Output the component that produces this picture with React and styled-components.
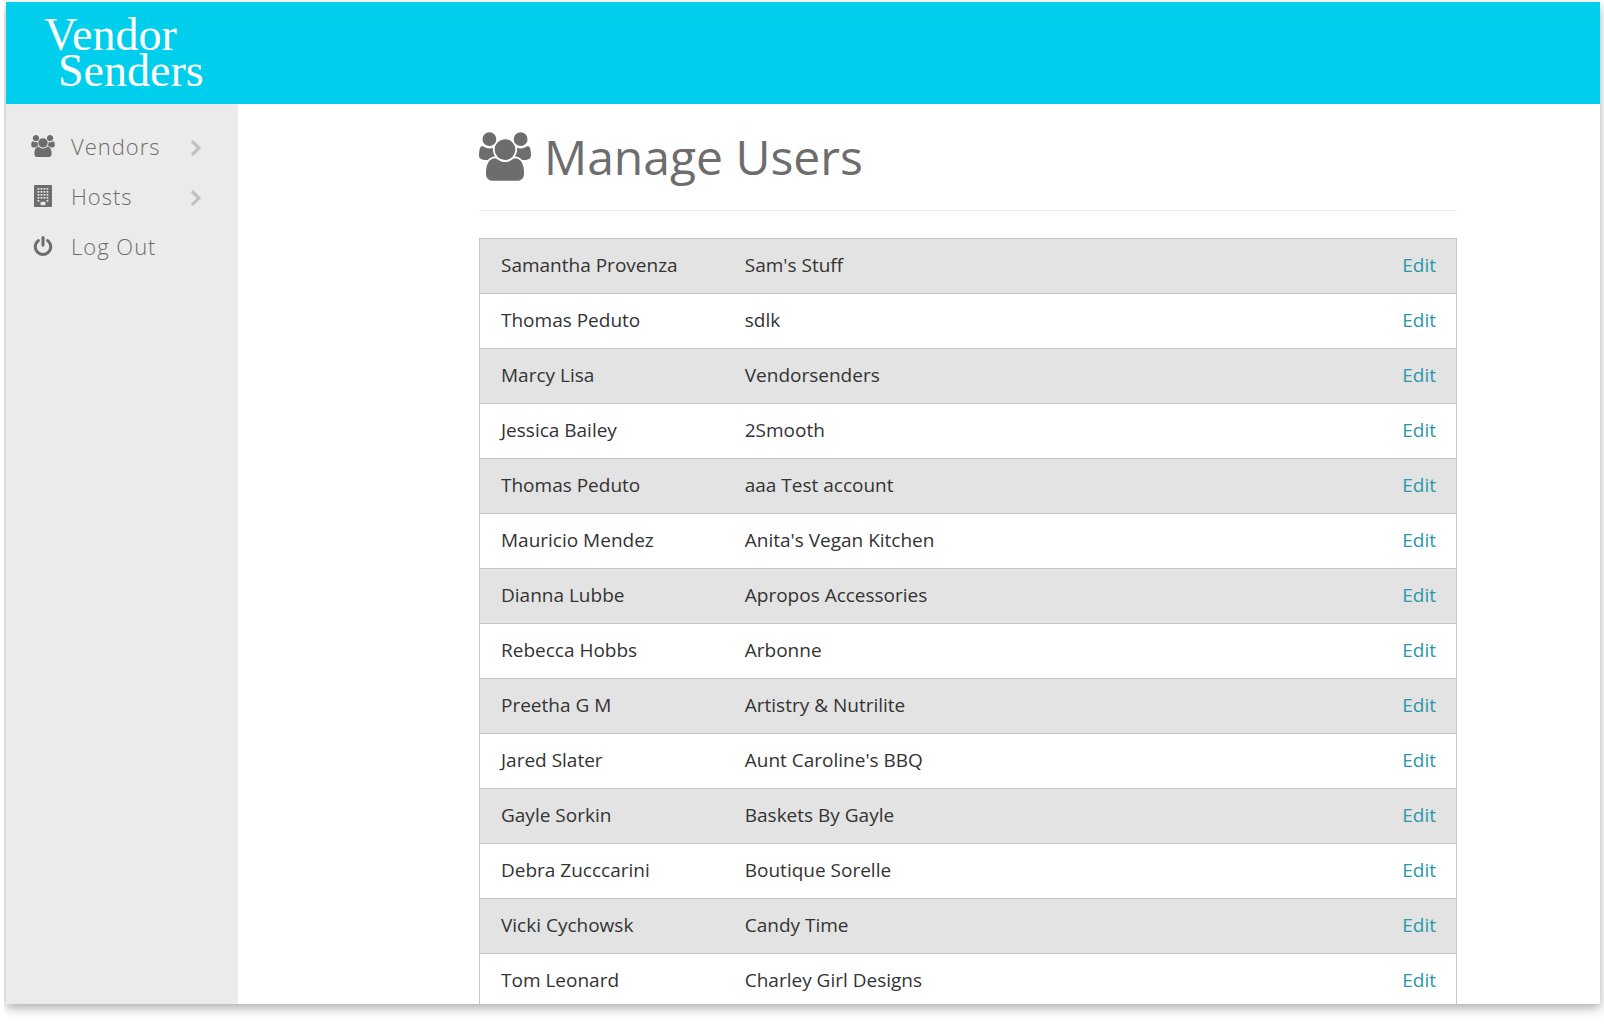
import React from "react";
import styled, { createGlobalStyle } from "styled-components";

const GlobalStyle = createGlobalStyle`
  *, *::before, *::after { box-sizing: border-box; }
  body {
    margin: 0;
    background: #fff;
    color: #333;
    font-family: "Open Sans", "Noto Sans", sans-serif;
    font-size: 19px;
  }
`;

const Page = styled.div`
  height: 100vh;
  margin-left: 4px;
  padding: 2px 4px 20px 2px;
  overflow: hidden;
`;

const Frame = styled.div`
  display: flex;
  flex-direction: column;
  height: 100%;
  background: #fff;
  box-shadow: 0 4px 10px rgba(0, 0, 0, 0.32);
`;

const Header = styled.header`
  flex: none;
  height: 102px;
  padding: 15px 38px;
  background: #00ceed;
`;

const Logo = styled.a`
  display: inline-flex;
  flex-direction: column;
  color: #fff;
  font-family: "Liberation Serif", serif;
  font-size: 46px;
  line-height: 36px;
  text-decoration: none;
`;

const LogoLine = styled.span`
  padding-left: ${(p) => (p.$indent ? "14px" : "0")};
`;

const Body = styled.div`
  display: flex;
  flex: 1;
  min-height: 0;
`;

const Sidebar = styled.nav`
  flex: none;
  width: 232px;
  padding: 17px 35px 0 25px;
  background: #ebebeb;
`;

const NavList = styled.ul`
  margin: 0;
  padding: 0;
  list-style: none;
`;

const NavLink = styled.a`
  display: grid;
  grid-template-columns: 24px 1fr 12px;
  column-gap: 16px;
  align-items: center;
  height: 50px;
  color: #6d6d6d;
  font-size: 22px;
  font-weight: 300;
  letter-spacing: 1px;
  text-decoration: none;
`;

const Icon = styled.svg`
  display: block;
  flex: none;
  justify-self: center;
  width: ${(p) => p.$width}px;
  height: ${(p) => p.$height}px;
  fill: ${(p) => p.$color || "#6d6d6d"};
`;

const Main = styled.main`
  flex: 1;
  min-width: 0;
  padding: 19px 143px 0 241px;
  overflow: hidden;
`;

const Title = styled.h1`
  display: flex;
  align-items: center;
  gap: 13px;
  height: 88px;
  margin: 0 0 27px;
  padding-bottom: 20px;
  border-bottom: 1px solid #eaeaea;
  color: #6d6d6d;
  font-size: 48px;
  font-weight: 400;
  line-height: 66px;
`;

const Table = styled.table`
  width: 100%;
  table-layout: fixed;
  border: 1px solid #c6c6c6;
  border-spacing: 0;
  border-collapse: collapse;
`;

const Row = styled.tr`
  height: 55px;
  border-bottom: 1px solid #c6c6c6;
  &:nth-child(odd) { background: #e3e3e3; }
`;

const Cell = styled.td`
  width: ${(p) => p.$width || "auto"};
  padding: 0 20px 2px 21px;
  text-align: ${(p) => p.$align || "left"};
  white-space: nowrap;
`;

const EditLink = styled.a`
  color: #2a98a9;
  text-decoration: none;
`;

const UsersIcon = ({ width, height }) => (
  <Icon $width={width} $height={height} viewBox="0 0 1920 1792" aria-hidden="true">
    <path d="M593 896q-162 5-265 128h-134q-82 0-138-40.5t-56-118.5q0-353 124-353 6 0 43.5 21t97.5 42.5 119 21.5q67 0 133-23-5 37-5 66 0 139 81 256zm1071 637q0 120-73 189.5t-194 69.5h-874q-121 0-194-69.5t-73-189.5q0-53 3.5-103.5t14-109 26.5-108.5 43-97.5 62-81 85.5-53.5 111.5-20q10 0 43 21.5t73 48 107 48 135 21.5 135-21.5 107-48 73-48 43-21.5q61 0 111.5 20t85.5 53.5 62 81 43 97.5 26.5 108.5 14 109 3.5 103.5zm-1024-1277q0 106-75 181t-181 75-181-75-75-181 75-181 181-75 181 75 75 181zm704 384q0 159-112.5 271.5t-271.5 112.5-271.5-112.5-112.5-271.5 112.5-271.5 271.5-112.5 271.5 112.5 112.5 271.5zm576 225q0 78-56 118.5t-138 40.5h-134q-103-123-265-128 81-117 81-256 0-29-5-66 66 23 133 23 59 0 119-21.5t97.5-42.5 43.5-21q124 0 124 353zm-128-609q0 106-75 181t-181 75-181-75-75-181 75-181 181-75 181 75 75 181z" />
  </Icon>
);

const windowColumns = [3, 6, 9, 12];
const windowRows = [3, 6, 9, 12];

const BuildingIcon = () => (
  <Icon $width={18} $height={22} viewBox="0 0 18 22" aria-hidden="true">
    <rect width="18" height="22" rx="1" />
    <g fill="#ebebeb">
      {windowRows.map((y) =>
        windowColumns.map((x) => <rect key={`${x}-${y}`} x={x + 0.6} y={y} width="1.7" height="1.7" />)
      )}
      <rect x="3.6" y="15" width="1.7" height="1.7" />
      <rect x="12.6" y="15" width="1.7" height="1.7" />
      <rect x="6.6" y="16.8" width="4.8" height="3.4" />
    </g>
  </Icon>
);

const PowerIcon = () => (
  <Icon $width={20} $height={20} viewBox="128 0 1536 1664" aria-hidden="true">
    <path d="M1664 896q0 156-61 298t-164 245-245 164-298 61-298-61-245-164-164-245-61-298q0-182 80.5-343t226.5-270q43-32 95.5-25t83.5 50q32 42 24.5 94.5t-49.5 84.5q-98 74-151.5 181t-53.5 228q0 104 40.5 198.5t109.5 163.5 163.5 109.5 198.5 40.5 198.5-40.5 163.5-109.5 109.5-163.5 40.5-198.5q0-121-53.5-228t-151.5-181q-42-32-49.5-84.5t24.5-94.5q31-43 84-50t95 25q146 109 226.5 270t80.5 343zm-640-768v640q0 52-38 90t-90 38-90-38-38-90v-640q0-52 38-90t90-38 90 38 38 90z" />
  </Icon>
);

const ChevronIcon = () => (
  <Icon $width={12} $height={20} $color="#c1c1c1" viewBox="0 0 12 20" aria-hidden="true">
    <path d="M2.4 4.3 9.8 11.7q.4.4 0 .8L2.4 19.7q-.4.4-.8 0L.2 18.3q-.4-.4 0-.8L5.6 12.1.2 6.7q-.4-.4 0-.8L1.6 4.3q.4-.4.8 0z" />
  </Icon>
);

const navItems = [
  { label: "Vendors", icon: <UsersIcon width={24} height={22} />, expandable: true },
  { label: "Hosts", icon: <BuildingIcon />, expandable: true },
  { label: "Log Out", icon: <PowerIcon />, expandable: false },
];

const users = [
  ["Samantha Provenza", "Sam's Stuff"],
  ["Thomas Peduto", "sdlk"],
  ["Marcy Lisa", "Vendorsenders"],
  ["Jessica Bailey", "2Smooth"],
  ["Thomas Peduto", "aaa Test account"],
  ["Mauricio Mendez", "Anita's Vegan Kitchen"],
  ["Dianna Lubbe", "Apropos Accessories"],
  ["Rebecca Hobbs", "Arbonne"],
  ["Preetha G M", "Artistry & Nutrilite"],
  ["Jared Slater", "Aunt Caroline's BBQ"],
  ["Gayle Sorkin", "Baskets By Gayle"],
  ["Debra Zucccarini", "Boutique Sorelle"],
  ["Vicki Cychowsk", "Candy Time"],
  ["Tom Leonard", "Charley Girl Designs"],
];

export default function App() {
  return (
    <>
      <GlobalStyle />
      <Page>
        <Frame>
          <Header>
            <Logo href="#home">
              <LogoLine>Vendor</LogoLine>
              <LogoLine $indent>Senders</LogoLine>
            </Logo>
          </Header>
          <Body>
            <Sidebar>
              <NavList>
                {navItems.map((item) => (
                  <li key={item.label}>
                    <NavLink href="#nav">
                      {item.icon}
                      <span>{item.label}</span>
                      {item.expandable && <ChevronIcon />}
                    </NavLink>
                  </li>
                ))}
              </NavList>
            </Sidebar>
            <Main>
              <Title>
                <UsersIcon width={52} height={49} />
                Manage Users
              </Title>
              <Table>
                <tbody>
                  {users.map(([name, company]) => (
                    <Row key={company}>
                      <Cell $width="25%">{name}</Cell>
                      <Cell>{company}</Cell>
                      <Cell $width="25%" $align="right">
                        <EditLink href="#edit">Edit</EditLink>
                      </Cell>
                    </Row>
                  ))}
                </tbody>
              </Table>
            </Main>
          </Body>
        </Frame>
      </Page>
    </>
  );
}
